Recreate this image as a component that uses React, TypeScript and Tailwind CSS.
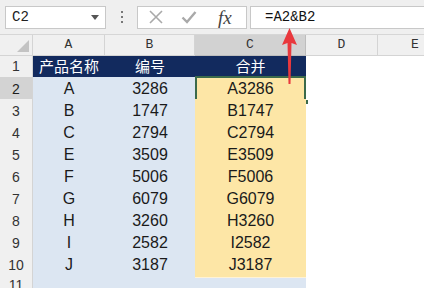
import React from 'react';

const ROWS: [string, string, string][] = [
    ['A', '3286', 'A3286'],
    ['B', '1747', 'B1747'],
    ['C', '2794', 'C2794'],
    ['E', '3509', 'E3509'],
    ['F', '5006', 'F5006'],
    ['G', '6079', 'G6079'],
    ['H', '3260', 'H3260'],
    ['I', '2582', 'I2582'],
    ['J', '3187', 'J3187'],
];

const GRID = 'grid grid-cols-[33px_72px_90px_111px_72px_1fr]';
const SANS = "font-['Liberation_Sans','Noto_Sans_CJK_SC',sans-serif]";
const MONO = "font-['Liberation_Mono',monospace]";

const RowNum: React.FC<{ n: number; active?: boolean }> = ({ n, active }) => (
    <div
        className={`flex items-center justify-center border-b border-r border-[#d4d4d4] text-[14px] ${SANS} ${
            active ? 'bg-[#d3d3d3] text-[#1e1e1e]' : 'bg-[#f0f0f0] text-[#333]'
        }`}
    >
        {n}
    </div>
);

const App: React.FC = () => {
    return (
        <div className="relative w-[424px] h-[288px] overflow-hidden bg-white">
            {/* formula bar */}
            <div className="flex items-center h-[35px] bg-[#efefef] border-b border-[#d6d6d6]">
                <div className="ml-[5px] w-[101px] h-[23px] border border-[#c8c8c8] bg-white flex items-center justify-between pl-[6px] pr-[6px]">
                    <span className={`text-[14px] text-[#222] ${MONO}`}>C2</span>
                    <svg width="8" height="5" viewBox="0 0 8 5">
                        <path d="M0 0 L8 0 L4 5 Z" fill="#555" />
                    </svg>
                </div>
                <div className="w-[31px] flex flex-col items-center gap-[3px]">
                    <span className="w-[2px] h-[2px] bg-[#777]" />
                    <span className="w-[2px] h-[2px] bg-[#777]" />
                    <span className="w-[2px] h-[2px] bg-[#777]" />
                </div>
                <div className="w-[110px] h-[23px] border border-[#c8c8c8] bg-white flex items-center">
                    <svg className="ml-[10px]" width="16" height="16" viewBox="0 0 16 16">
                        <path d="M2 2 L14 14 M14 2 L2 14" stroke="#a9a9a9" strokeWidth="1.6" />
                    </svg>
                    <svg className="ml-[17px]" width="16" height="14" viewBox="0 0 16 14">
                        <path d="M1.5 7.5 L6 12 L14.5 2" stroke="#a9a9a9" strokeWidth="2.4" fill="none" />
                    </svg>
                    <span className="ml-[21px] text-[19px] italic text-[#444] font-['Liberation_Serif',serif] leading-none">fx</span>
                </div>
                <div className="ml-[3px] flex-1 h-[23px] border border-[#c8c8c8] border-r-0 bg-white flex items-center pl-[14px]">
                    <span className={`text-[14px] text-[#111] ${MONO}`}>=A2&amp;B2</span>
                </div>
            </div>

            {/* column headers */}
            <div className={`${GRID} h-[21px] text-[13px] text-[#333] ${MONO}`}>
                <div className="relative bg-[#f0f0f0] border-r border-b border-[#d4d4d4]">
                    <svg className="absolute right-[3px] bottom-[3px]" width="12" height="12" viewBox="0 0 12 12">
                        <path d="M12 0 L12 12 L0 12 Z" fill="#c3c3c3" />
                    </svg>
                </div>
                <div className="flex items-center justify-center bg-[#f0f0f0] border-r border-b border-[#d4d4d4]">A</div>
                <div className="flex items-center justify-center bg-[#f0f0f0] border-r border-b border-[#d4d4d4]">B</div>
                <div className="flex items-center justify-center bg-[#d2d2d2] border-r border-b border-[#bdbdbd]">C</div>
                <div className="flex items-center justify-center bg-[#f0f0f0] border-r border-b border-[#d4d4d4]">D</div>
                <div className="flex items-center justify-center bg-[#f0f0f0] border-b border-[#d4d4d4] pl-[28px]">E</div>
            </div>

            {/* header row 1 */}
            <div className={`${GRID} h-[21px] ${SANS}`}>
                <RowNum n={1} />
                <div className="flex items-center justify-center bg-[#122a5e] text-white text-[15px]">产品名称</div>
                <div className="flex items-center justify-center bg-[#122a5e] text-white text-[15px]">编号</div>
                <div className="flex items-center justify-center bg-[#122a5e] text-white text-[15px]">合并</div>
                <div className="bg-white" />
                <div className="bg-white" />
            </div>

            {/* data rows */}
            {ROWS.map(([name, code, merged], i) => (
                <div key={name} className={`${GRID} h-[22px] ${SANS}`}>
                    <RowNum n={i + 2} active={i === 0} />
                    <div className="flex items-center justify-center bg-[#dce6f2] border-b border-white text-[16px] text-[#1a1a1a]">{name}</div>
                    <div className="flex items-center justify-center bg-[#dce6f2] border-b border-white text-[16px] text-[#1a1a1a]">{code}</div>
                    <div className="relative flex items-center justify-center bg-[#fde6a6] border-b border-[#fff3d6] text-[16px] text-[#1a1a1a]">
                        {merged}
                        {i === 0 && (
                            <>
                                <span className="absolute -top-px left-0 right-0 -bottom-px border-2 border-[#3b6a4b]" />
                                <span className="absolute -right-[3px] -bottom-[4px] w-[6px] h-[6px] bg-[#3b6a4b] border border-white" />
                            </>
                        )}
                    </div>
                    <div className="bg-white" />
                    <div className="bg-white" />
                </div>
            ))}

            {/* row 11 */}
            <div className={`${GRID} h-[22px] ${SANS}`}>
                <RowNum n={11} />
                <div className="bg-[#dce6f2]" />
                <div className="bg-[#dce6f2]" />
                <div className="bg-[#dce6f2]" />
                <div className="bg-white" />
                <div className="bg-white" />
            </div>

            {/* red annotation arrow */}
            <svg className="absolute left-[281px] top-[28px]" width="17" height="57" viewBox="0 0 17 57">
                <path d="M8.5 0 L16 17 L10.5 15 L9.5 56 L7.5 56 L6.5 15 L1 17 Z" fill="#e9383d" />
            </svg>
        </div>
    );
};

export default App;
